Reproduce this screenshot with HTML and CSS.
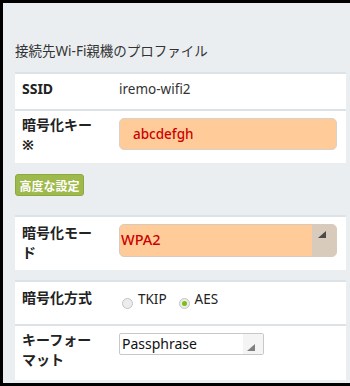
FILE: index.html
```html
<!DOCTYPE html>
<html>
<head>
    <meta charset="utf-8">
    <title>Wi-Fi Profile</title>
    <link rel="stylesheet" href="styles.css">
</head>
<body>
    <div class="screen">
        <div class="title">接続先Wi-Fi親機のプロファイル</div>

        <div class="panel">
            <div class="row row-ssid">
                <div class="label">SSID</div>
                <div class="value">iremo-wifi2</div>
            </div>
            <div class="row row-key">
                <div class="label">暗号化キー※</div>
                <div class="value">
                    <div class="text-input">abcdefgh</div>
                </div>
            </div>
        </div>

        <button class="adv-btn">高度な設定</button>

        <div class="panel">
            <div class="row row-mode">
                <div class="label">暗号化モード</div>
                <div class="value">
                    <div class="select select-orange">
                        <span class="select-text">WPA2</span>
                        <span class="select-arrow">
                            <svg width="8" height="7" viewBox="0 0 8 7"><polygon points="8,0 8,7 0,7" fill="#4a4a4a"/></svg>
                        </span>
                    </div>
                </div>
            </div>
        </div>

        <div class="panel">
            <div class="row row-method">
                <div class="label">暗号化方式</div>
                <div class="value radios">
                    <span class="radio"></span><span class="radio-label">TKIP</span>
                    <span class="radio checked"></span><span class="radio-label">AES</span>
                </div>
            </div>
            <div class="row row-format">
                <div class="label">キーフォーマット</div>
                <div class="value">
                    <div class="select select-plain">
                        <span class="select-text">Passphrase</span>
                        <span class="select-arrow">
                            <svg width="8" height="7" viewBox="0 0 8 7"><polygon points="8,0 8,7 0,7" fill="#808080"/></svg>
                        </span>
                    </div>
                </div>
            </div>
        </div>
    </div>
</body>
</html>
```

FILE: styles.css
```css
body {
    margin: 0;
    background: #000;
    font-family: "Noto Sans", "Noto Sans CJK JP", sans-serif;
    color: #222;
}
.screen {
    width: 331px;
    height: 343px;
    margin: 3px 4px 3px 3px;
    padding: 37px 10px 0 12px;
    background: #eaeef1;
}
.title {
    font-size: 13.5px;
    line-height: 20px;
    color: #333;
    margin-bottom: 11px;
    padding-top: 1px;
}
.panel {
    background: #fff;
}
.row {
    display: flex;
    align-items: flex-start;
    border-top: 2px solid #dde2e6;
    padding: 0 9px 0 7px;
}
.label {
    flex: 0 0 78px;
    margin-right: 19px;
    font-size: 14px;
    font-weight: bold;
    line-height: 20px;
    color: #222;
}
.value {
    flex: 1;
    font-size: 13.5px;
    line-height: 20px;
    color: #333;
}
.row-ssid { padding-top: 5px; padding-bottom: 10px; }
.row-key { padding-top: 4px; padding-bottom: 8px; }
.row-mode { padding-top: 6px; padding-bottom: 7px; }
.row-method { padding-top: 6px; padding-bottom: 15px; }
.row-format { padding-top: 4px; padding-bottom: 10px; }

.text-input {
    margin-top: 3px;
    height: 30px;
    line-height: 30px;
    padding-left: 13px;
    background: #ffcc99;
    border: 1px solid #d9d2cb;
    border-radius: 5px;
    color: #cc0000;
    font-size: 13.5px;
    font-weight: 500;
}
.adv-btn {
    display: block;
    margin: 11px 0 19px;
    width: 69px;
    height: 22px;
    padding: 0;
    background: #9eb94c;
    border: 1px solid #8ea842;
    border-radius: 3px;
    color: #fff;
    font-family: "Noto Sans CJK JP", sans-serif;
    font-size: 12px;
    font-weight: bold;
}
.panel + .adv-btn + .panel { margin-bottom: 10px; }

.select {
    display: flex;
    border-radius: 5px;
    overflow: hidden;
}
.select-orange {
    margin-top: 1px;
    height: 31px;
    background: #ffcc99;
    border: 1px solid #d8cbbd;
    color: #cc0000;
}
.select-orange .select-text {
    flex: 1;
    line-height: 29px;
    padding-left: 1px;
    font-size: 14.5px;
    font-weight: 500;
}
.select-orange .select-arrow {
    width: 24px;
    background: #d9cbbc;
    padding: 6px 0 0 6px;
    box-sizing: border-box;
}
.select-plain {
    margin-top: 3px;
    width: 143px;
    height: 20px;
    background: #fff;
    border: 1px solid #c8c8c8;
    border-radius: 2px;
    color: #111;
}
.select-plain .select-text {
    flex: 1;
    line-height: 20px;
    padding-left: 2px;
    font-size: 14px;
}
.select-plain .select-arrow {
    width: 20px;
    padding: 10px 0 0 4px;
    box-sizing: border-box;
    background: #f4f4f4;
}
.select-arrow svg { display: block; }

.radios {
    display: flex;
    align-items: center;
    padding-left: 3px;
}
.radio {
    width: 9px;
    height: 9px;
    border: 1px solid #c4c4c4;
    border-radius: 50%;
    background: #ececec;
    margin: 10px 5px 0 0;
    position: relative;
}
.radio.checked::after {
    content: "";
    position: absolute;
    left: 2px;
    top: 2px;
    width: 5px;
    height: 5px;
    border-radius: 50%;
    background: #7cbf12;
}
.radio-label {
    margin-right: 12px;
    color: #222;
}
```
